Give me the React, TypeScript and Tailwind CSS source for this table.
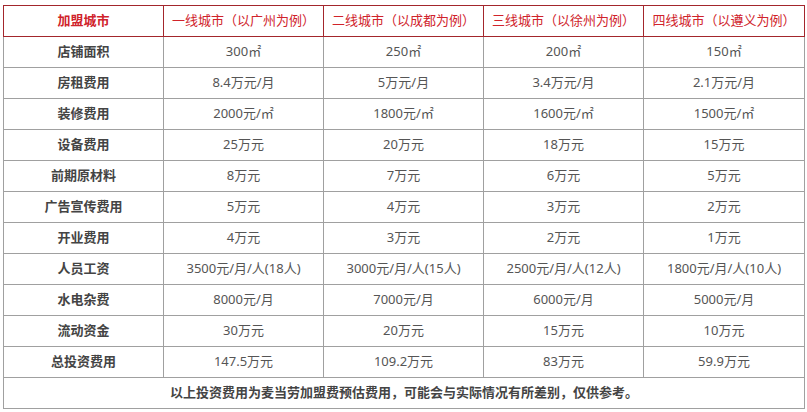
const headers = ["一线城市（以广州为例）", "二线城市（以成都为例）", "三线城市（以徐州为例）", "四线城市（以遵义为例）"]

const rows: [string, string, string, string, string][] = [
  ["店铺面积", "300㎡", "250㎡", "200㎡", "150㎡"],
  ["房租费用", "8.4万元/月", "5万元/月", "3.4万元/月", "2.1万元/月"],
  ["装修费用", "2000元/㎡", "1800元/㎡", "1600元/㎡", "1500元/㎡"],
  ["设备费用", "25万元", "20万元", "18万元", "15万元"],
  ["前期原材料", "8万元", "7万元", "6万元", "5万元"],
  ["广告宣传费用", "5万元", "4万元", "3万元", "2万元"],
  ["开业费用", "4万元", "3万元", "2万元", "1万元"],
  ["人员工资", "3500元/月/人(18人)", "3000元/月/人(15人)", "2500元/月/人(12人)", "1800元/月/人(10人)"],
  ["水电杂费", "8000元/月", "7000元/月", "6000元/月", "5000元/月"],
  ["流动资金", "30万元", "20万元", "15万元", "10万元"],
  ["总投资费用", "147.5万元", "109.2万元", "83万元", "59.9万元"],
]

export default function App() {
  return (
    <div className="w-[807px] h-[412px] bg-white pt-[5px] pl-[3px]">
      <table className="border-collapse table-fixed w-[801px] font-['Noto_Sans','Noto_Sans_CJK_SC',sans-serif] text-[13px]">
        <colgroup>
          <col className="w-[160px]" />
          <col className="w-[160px]" />
          <col className="w-[160px]" />
          <col className="w-[160px]" />
          <col className="w-[161px]" />
        </colgroup>
        <thead>
          <tr className="h-[31px]">
            <th className="border border-[#a3262c] text-[#d0232b] font-bold text-center p-0">加盟城市</th>
            {headers.map((h) => (
              <th key={h} className="border border-[#a3262c] text-[#d0232b] font-normal text-center p-0">
                {h}
              </th>
            ))}
          </tr>
        </thead>
        <tbody>
          {rows.map((r) => (
            <tr key={r[0]} className="h-[31px]">
              <td className="border border-[#a0a0a0] text-[#444] font-bold text-center p-0">{r[0]}</td>
              {r.slice(1).map((v, i) => (
                <td key={i} className="border border-[#a0a0a0] text-[#555] text-center p-0">
                  {v}
                </td>
              ))}
            </tr>
          ))}
          <tr className="h-[31px]">
            <td colSpan={5} className="border border-[#a0a0a0] text-[#444] font-bold text-center p-0">
              以上投资费用为麦当劳加盟费预估费用，可能会与实际情况有所差别，仅供参考。
            </td>
          </tr>
        </tbody>
      </table>
    </div>
  )
}
